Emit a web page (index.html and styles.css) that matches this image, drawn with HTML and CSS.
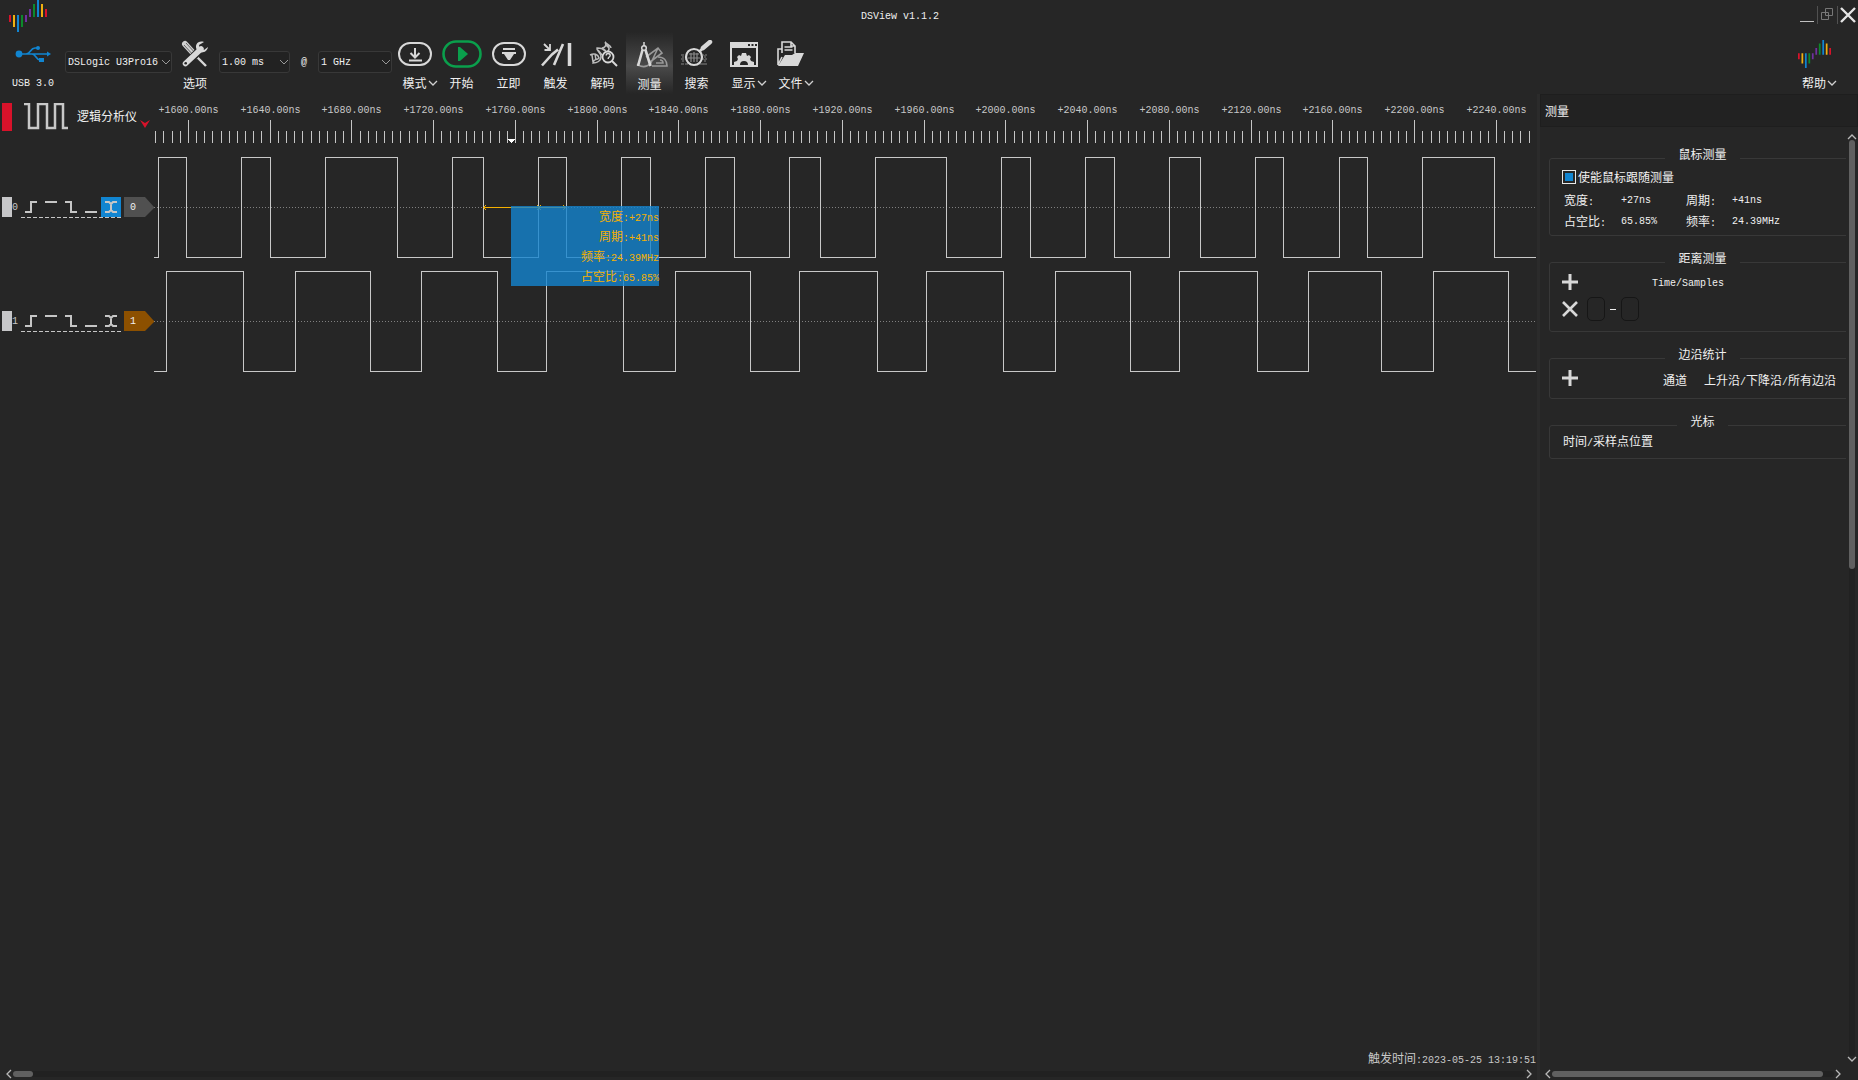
FILE: index.html
```html
<!DOCTYPE html>
<html lang="zh-CN">
<head>
<meta charset="utf-8">
<title>DSView v1.1.2</title>
<link rel="stylesheet" href="styles.css">
</head>
<body>
<svg class="defs" aria-hidden="true">
  <symbol id="logo" viewBox="0 0 38 32">
    <path fill="#d8122a" d="M0 15h2v7h-2zM36 9h2v8h-2z"/>
    <path fill="#f0b010" d="M4 15h2v12h-2zM32 4h2v13h-2z"/>
    <path fill="#1185d1" d="M8 15h2v17h-2zM28 0h2v17h-2z"/>
    <path fill="#0c8a2c" d="M12 15h2v12h-2zM24 4h2v13h-2z"/>
    <path fill="#7030a0" d="M16 15h2v7h-2zM20 9h2v8h-2z"/>
  </symbol>
  <symbol id="down" viewBox="0 0 10 6"><path d="M1 1l4 4 4-4" fill="none" stroke="currentColor" stroke-width="1.300"/></symbol>
  <symbol id="plus" viewBox="0 0 16 16"><path d="M8 0v16M0 8h16" stroke="#d8d8d8" stroke-width="3"/></symbol>
  <symbol id="cross" viewBox="0 0 16 16"><path d="M1 1l14 14M15 1L1 15" stroke="#d8d8d8" stroke-width="2.600"/></symbol>
  <symbol id="triggers" viewBox="0 0 80 20">
    <path d="M4 15h6V5h6M24 5h12M44 5h6v10h6M64 15h12" fill="none" stroke="#c6c6c6" stroke-width="2"/>
  </symbol>
  <symbol id="either" viewBox="0 0 20 20">
    <path d="M4 5h4l2 2 2-2h4M4 15h4l2-2 2 2h4M10 6v8" fill="none" stroke="#c6c6c6" stroke-width="2"/>
  </symbol>
</svg>

<header class="titlebar">
  <svg class="app-logo"><use href="#logo"/></svg>
  <h1 class="latin">DSView v1.1.2</h1>
  <div class="window-buttons">
    <button class="win" aria-label="最小化"><svg width="14" height="18"><path d="M0 15.500h14" stroke="#c0c0c0"/></svg></button>
    <button class="win split" aria-label="还原"><svg width="14" height="18"><path d="M1.500 6.500h7v7h-7zM5.500 2.500h7v7h-7z" fill="none" stroke="#777"/></svg></button>
    <button class="win split" aria-label="关闭"><svg width="16" height="18"><path d="M1 2l14 14M15 2L1 16" stroke="#e4e4e4" stroke-width="2.400"/></svg></button>
  </div>
</header>

<nav class="toolbar">
  <button class="tool usb">
    <svg class="icon" viewBox="0 0 36 28"><g fill="none" stroke="#1185d1" stroke-width="1.600"><path d="M3 14h30M11 14c5 0 4-6 9-6h3M17 14c4 0 4 6 8 6h2"/></g><g fill="#1185d1"><circle cx="4" cy="14" r="3.400"/><path d="M32 11.500l4 2.500-4 2.500z"/><circle cx="23" cy="8" r="2"/><path d="M24 18h5v4h-5z"/></g></svg>
    <span class="latin">USB 3.0</span>
  </button>
  <select class="combo device latin" aria-label="设备"><option>DSLogic U3Pro16</option></select>
  <button class="tool options">
    <svg class="icon" viewBox="0 0 28 28"><path d="M4 4l11 12" stroke="#d0d0d0" stroke-width="6" stroke-linecap="round"/><path d="M3 5l11 12M5 3l11 12" stroke="#666" stroke-width="1"/><path d="M16 17l9 9" stroke="#d8d8d8" stroke-width="2.400"/><path d="M5 24L20 9" stroke="#262626" stroke-width="8"/><path d="M4.500 23.500L20 9" stroke="#d8d8d8" stroke-width="5.500" stroke-linecap="round"/><path d="M23 2c-6-2-10 3-7 8 3 4 10 3 11-3l-4 3-4-1-1-4z" fill="#d8d8d8"/><circle cx="4.700" cy="23.300" r="1.300" fill="#262626"/></svg>
    <span>选项</span>
  </button>
  <select class="combo duration latin" aria-label="采样时长"><option>1.00 ms</option></select>
  <span class="at latin">@</span>
  <select class="combo rate latin" aria-label="采样率"><option>1 GHz</option></select>
  <div class="tools">
    <button class="tool menu">
      <svg class="icon" viewBox="0 0 40 28"><g fill="none" stroke="#d8d8d8" stroke-width="2"><rect x="4" y="3" width="32" height="22" rx="11"/><path d="M20 8v9M15.500 13l4.500 4.500 4.500-4.500M14 20.500h13"/></g></svg>
      <span>模式<svg class="chev"><use href="#down"/></svg></span>
    </button>
    <button class="tool">
      <svg class="icon" viewBox="0 0 40 28"><rect x="1.500" y="1.500" width="37" height="25" rx="12.500" fill="none" stroke="#0a9f4c" stroke-width="2.600"/><path d="M16 7h2l8 7-8 7h-2z" fill="#0a9f4c"/></svg>
      <span>开始</span>
    </button>
    <button class="tool">
      <svg class="icon" viewBox="0 0 40 28"><rect x="4" y="3" width="32" height="22" rx="11" fill="none" stroke="#d8d8d8" stroke-width="2"/><path d="M14 8h12v2H14zM13 12h14v2h-2l-4 6h-2l-4-6h-2z" fill="#d8d8d8"/></svg>
      <span>立即</span>
    </button>
    <button class="tool">
      <svg class="icon" viewBox="0 0 40 28"><g fill="none" stroke="#d8d8d8"><path d="M8 4l6 6M8.500 10H14V4" stroke-width="1.800"/><path d="M6 25.500l10-11 6-5M18 25l9-21" stroke-width="2.600"/><path d="M33.500 3v23" stroke-width="3.500"/></g></svg>
      <span>触发</span>
    </button>
    <button class="tool">
      <svg class="icon" viewBox="0 0 40 28"><g fill="none" stroke="#bdbdbd" stroke-width="1.500"><path d="M7 15c4-2 8-1 9 3-3 3-5 0-6 5 4 0 8-2 8-6 0-5-5-6-4-9 4 0 7 1 9 3M22 2c2 3 0 6-3 6M22 2c5 4 5 8 2 10M28 8c0-3-4-3-6-6M9 15l1 7M12 14l1 6M15 10l4 5M18 8l4 3M23 5l3 3"/></g><circle cx="25" cy="17" r="5.500" fill="#262626" stroke="#d8d8d8" stroke-width="1.800"/><path d="M29 21l5 5" stroke="#d8d8d8" stroke-width="2"/><path d="M23.200 15.500c0-3 4-2.500 4 0 0 1.500-2 1.500-2 3v.6" fill="none" stroke="#d8d8d8" stroke-width="1.400"/></svg>
      <span>解码</span>
    </button>
    <button class="tool active" aria-pressed="true">
      <svg class="icon" viewBox="0 0 40 28"><g fill="none" stroke="#9a9a9a" stroke-width="1.600"><path d="M16 16L28 7l4 5-12 9M28 7L20 24M7 23c5 4 10 3 14-1"/><path d="M22 25h15c0-5-3-9-9-9M26 22h7c0-2-1-3-3-3"/></g><g fill="none" stroke="#d8d8d8"><circle cx="14" cy="7" r="2.300" stroke-width="1.500"/><path d="M14 1v4" stroke-width="1.500"/><path d="M12.500 9L8 25M15.500 9l5 16" stroke-width="2.600"/></g></svg>
      <span>测量</span>
    </button>
    <button class="tool">
      <svg class="icon" viewBox="0 0 40 28"><path d="M4 15h26M4 19h26M4 24h26M6 15v10M10 15v10M24 15v10M28 15v10" stroke="#555" stroke-width="2" stroke-dasharray="3 1"/><circle cx="17" cy="17" r="8" fill="#262626" stroke="#d8d8d8" stroke-width="2.200"/><path d="M12 14h10M11 18h12M14 13v9M17 12v10M20 13v9" stroke="#8a8a8a" stroke-width="1.200"/><path d="M22 12l5-5" stroke="#d8d8d8" stroke-width="2.500"/><path d="M26 8l7-6" stroke="#d8d8d8" stroke-width="4.500" stroke-linecap="round"/></svg>
      <span>搜索</span>
    </button>
    <button class="tool menu">
      <svg class="icon" viewBox="0 0 40 28"><path d="M6 2h28v25H6zM8 8v17h24V8zM24 4v2h2V4zM27.500 4v2h2V4zM31 4v2h2V4z" fill="#d8d8d8" fill-rule="evenodd"/><path d="M10 25v-3l3-1 1-2-1-2 2-2 2 1 1-3h4l1 3 2-1 2 2-1 2 1 2 3 1v3h-6a4 4 0 0 0-8 0z" fill="#d8d8d8"/></svg>
      <span>显示<svg class="chev"><use href="#down"/></svg></span>
    </button>
    <button class="tool menu">
      <svg class="icon" viewBox="0 0 40 28"><g fill="none" stroke="#d8d8d8" stroke-width="1.600"><path d="M11 13V2h9l4 4v7M20 2v4h4M13.500 7h8M13.500 10h8M11 9H7v16l4-8"/></g><path d="M14 15h7l3-2h9l-6 13H7z" fill="#d8d8d8"/></svg>
      <span>文件<svg class="chev"><use href="#down"/></svg></span>
    </button>
  </div>
  <button class="tool menu help">
    <svg class="icon"><use href="#logo"/></svg>
    <span>帮助<svg class="chev"><use href="#down"/></svg></span>
  </button>
</nav>

<main class="workspace">
  <section class="viewer">
    <div class="traces">
      <aside class="channels">
        <div class="analyzer">
          <i class="red-bar"></i>
          <svg class="pulse" viewBox="0 0 44 28"><path d="M0 1h5v24h9V1h9v24h8V1h8v24h5" fill="none" stroke="#c8c8c8" stroke-width="2.500"/></svg>
          <span>逻辑分析仪</span>
          <svg class="red-arrow" viewBox="0 0 10 8"><path d="M0 0l5 3 5-3-5 8z" fill="#d8122a"/></svg>
        </div>
        <div class="channel">
          <i class="bar"></i><span class="index latin">0</span>
          <div class="trigger"><svg width="80" height="20"><use href="#triggers"/></svg><svg class="on" width="20" height="20"><use href="#either"/></svg></div>
          <span class="tag latin">0</span>
        </div>
        <div class="channel">
          <i class="bar"></i><span class="index latin">1</span>
          <div class="trigger"><svg width="80" height="20"><use href="#triggers"/></svg><svg width="20" height="20"><use href="#either"/></svg></div>
          <span class="tag orange latin">1</span>
        </div>
      </aside>
      <div class="plot">
        <svg id="plot" class="plot-svg" shape-rendering="crispEdges"></svg>
        <div class="tip">
          <p>宽度<span class="latin">:+27ns</span></p>
          <p>周期<span class="latin">:+41ns</span></p>
          <p>频率<span class="latin">:24.39MHz</span></p>
          <p>占空比<span class="latin">:65.85%</span></p>
        </div>
      </div>
    </div>
    <p class="trigger-time">触发时间<span class="latin">:2023-05-25 13:19:51</span></p>
    <div class="hscroll main-scroll">
      <svg class="chev left"><use href="#down"/></svg>
      <div class="track"><div class="thumb start"></div></div>
      <svg class="chev right"><use href="#down"/></svg>
    </div>
  </section>

  <aside class="panel">
    <h2>测量</h2>
    <div class="panel-body">
      <div class="groups">
        <fieldset class="mouse">
          <legend>鼠标测量</legend>
          <label class="check"><input type="checkbox" checked>使能鼠标跟随测量</label>
          <dl>
            <dt>宽度<span class="latin">:</span></dt><dd class="latin">+27ns</dd>
            <dt>周期<span class="latin">:</span></dt><dd class="latin">+41ns</dd>
            <dt>占空比<span class="latin">:</span></dt><dd class="latin">65.85%</dd>
            <dt>频率<span class="latin">:</span></dt><dd class="latin">24.39MHz</dd>
          </dl>
        </fieldset>
        <fieldset class="distance">
          <legend>距离测量</legend>
          <div class="line">
            <button class="mini" aria-label="添加距离"><svg><use href="#plus"/></svg></button>
            <span class="samples latin">Time/Samples</span>
          </div>
          <div class="line pair">
            <button class="mini" aria-label="删除距离"><svg><use href="#cross"/></svg></button>
            <button class="cursor" aria-label="起始光标"></button>
            <i class="dash"></i>
            <button class="cursor" aria-label="结束光标"></button>
          </div>
        </fieldset>
        <fieldset class="edges">
          <legend>边沿统计</legend>
          <div class="line">
            <button class="mini" aria-label="添加边沿"><svg><use href="#plus"/></svg></button>
            <span class="chan">通道</span>
            <span class="kinds">上升沿<span class="latin">/</span>下降沿<span class="latin">/</span>所有边沿</span>
          </div>
        </fieldset>
        <fieldset class="cursors">
          <legend>光标</legend>
          <p>时间<span class="latin">/</span>采样点位置</p>
        </fieldset>
      </div>
      <div class="vscroll">
        <svg class="chev up"><use href="#down"/></svg>
        <div class="track"><div class="thumb"></div></div>
        <svg class="chev"><use href="#down"/></svg>
      </div>
    </div>
    <div class="hscroll panel-scroll">
      <svg class="chev left"><use href="#down"/></svg>
      <div class="track"><div class="thumb wide"></div></div>
      <svg class="chev right"><use href="#down"/></svg>
    </div>
  </aside>
</main>
<script src="script.js"></script>
</body>
</html>
```
FILE: styles.css
```css
* { box-sizing: border-box; }
html, body { height: 100%; }
body {
  margin: 0;
  display: flex;
  flex-direction: column;
  overflow: hidden;
  background: #262626;
  color: #f0f0f0;
  font: 12px/16px "Noto Sans CJK SC", sans-serif;
}
.latin { font-family: "Liberation Mono", "Noto Sans CJK SC", monospace; font-size: 10px; }
p .latin, dt .latin, .kinds .latin { line-height: 10px; }
.defs { display: none; }
svg { display: block; flex: none; }
h1, h2, p, dl, dd { margin: 0; font-weight: normal; }
button { padding: 0; border: 0; background: none; color: inherit; font: inherit; }

.titlebar { display: flex; height: 32px; flex: none; }
.app-logo { width: 38px; height: 32px; margin-left: 9px; }
.titlebar h1 { flex: 1; padding-right: 47px; text-align: center; line-height: 34px; }
.window-buttons { display: flex; width: 58px; align-items: center; gap: 3px; padding-bottom: 2px; }
.win.split { border-left: 1px solid #505050; padding-left: 2px; }

.toolbar { display: flex; flex: none; height: 62px; }
.tool { display: flex; flex-direction: column; align-items: center; width: 47px; padding-top: 8px; gap: 7px; }
.tool .icon { width: 40px; height: 28px; }
.tool span { display: flex; align-items: center; white-space: nowrap; }
.chev { width: 10px; height: 6px; color: #b8b8b8; }
.tool .chev { margin-left: 1px; color: #d0d0d0; }
.menu span { padding-left: 11px; }
.tool.active { background: linear-gradient(#262626, #4a4a4a 55%, #262626); padding-top: 9px; }
.tool .latin { line-height: 18px; }
.usb { width: 65px; padding-left: 1px; }
.combo {
  appearance: none;
  height: 22px;
  margin-top: 19px;
  padding: 0 2px;
  border: 1px solid #383838;
  border-radius: 3px;
  color: #f0f0f0;
  background: #222 url("data:image/svg+xml,%3Csvg xmlns='http://www.w3.org/2000/svg' width='10' height='6'%3E%3Cpath d='M1 1l4 4 4-4' fill='none' stroke='%23999'/%3E%3C/svg%3E") no-repeat right 0 center;
}
.device { width: 107px; }
.duration { width: 71px; }
.rate { width: 74px; }
.options { width: 47px; padding-right: 1px; }
.options .icon { width: 28px; }
.at { width: 28px; text-align: center; padding-top: 23px; }
.tools { display: flex; flex: 1; margin-left: -1px; }
.help { width: 62px; margin-right: 13px; }
.help .icon { width: 33px; }

.workspace { display: flex; flex: 1; min-height: 0; }
.viewer { display: flex; flex: 1; flex-direction: column; min-width: 0; }
.traces { display: flex; flex: 1; min-height: 0; }
.channels { width: 154px; padding-top: 9px; flex: none; }
.analyzer { display: flex; height: 94px; padding-left: 2px; }
.red-bar { width: 10px; height: 28px; background: #d8122a; }
.pulse { width: 44px; height: 28px; margin: 0 9px 0 12px; }
.analyzer span { margin-top: 5px; }
.red-arrow { width: 10px; height: 8px; margin: 17px 0 0 3px; }
.channel { display: flex; height: 20px; margin-bottom: 94px; padding-left: 2px; }
.bar { width: 10px; background: #c6c6c8; }
.index { width: 9px; line-height: 22px; color: #c6c6c8; }
.trigger {
  display: flex;
  height: 21px;
  background: repeating-linear-gradient(90deg, #c6c6c6 0 4px, transparent 4px 6px) left bottom / 100% 1px no-repeat;
}
.on { background: #1185d1; }
.tag {
  width: 30px;
  margin-left: 3px;
  padding-left: 6px;
  line-height: 22px;
  background: #505050;
  clip-path: polygon(0 0, 21px 0, 30px 10px, 30px 11px, 21px 20px, 0 20px);
}
.orange { background: #8c5000; }
.plot { position: relative; flex: 1; min-width: 0; margin-right: 1px; }
.plot-svg { width: 100%; height: 100%; }
.plot-svg text { fill: #c8c8c8; text-anchor: middle; }
.tip {
  position: absolute;
  left: 357px;
  top: 112px;
  width: 148px;
  background: rgba(20, 132, 208, .8);
  color: #f5b000;
  text-align: right;
  line-height: 20px;
}
.trigger-time { text-align: right; color: #c8c8c8; padding: 0 1px 0 0; }

.hscroll { display: flex; height: 14px; flex: none; align-items: center; padding: 1px 4px 0; }
.main-scroll { padding-left: 5px; }
.panel-scroll { padding-right: 16px; }
.track { flex: 1; background: #212121; border-radius: 3px; }
.hscroll .track { height: 6px; }
.thumb { height: 6px; border-radius: 3px; background: #606060; }
.start { width: 20px; }
.wide { width: 96%; }
.left { transform: rotate(90deg); }
.right { transform: rotate(-90deg); }
.up { transform: rotate(180deg); }
.hscroll .chev { width: 10px; margin: 0 -1px; }

.panel { display: flex; flex-direction: column; width: 321px; flex: none; border-left: 3px solid #2b2b2b; }
.panel h2 { height: 33px; padding-left: 4px; font-size: 12px; line-height: 31px; background: #222; border: 1px solid #1e1e1e; }
.panel-body { display: flex; flex: 1; min-height: 0; }
.groups { flex: 1; min-width: 0; overflow: hidden; padding: 19px 0 0 9px; }
fieldset { width: 307px; margin: 0 0 14px; padding: 0 12px; border: 1px solid #383838; border-radius: 3px; }
legend { margin: 0 auto; padding: 0 13px 8px; }
.mouse { height: 90px; }
.distance { height: 82px; }
.edges { height: 53px; }
.cursors { height: 46px; }
.check { display: flex; align-items: center; gap: 2px; height: 14px; }
.check input { appearance: none; width: 14px; height: 14px; margin: 0; border: 1px solid #e8e8e8; background: #1185d1; box-shadow: inset 0 0 0 2px #262626; }
dl { display: grid; grid-template-columns: 57px 65px 46px 1fr; row-gap: 3px; padding: 8px 0 0 2px; }
dd.latin { line-height: 18px; }
dt { white-space: nowrap; }
.line { display: flex; height: 16px; align-items: center; }
.mini svg { width: 16px; height: 16px; }
.samples { margin-left: 74px; padding-top: 4px; }
.pair { height: 24px; margin-top: 7px; gap: 5px; }
.pair .mini { margin-right: 4px; }
.cursor { width: 18px; height: 24px; border: 1px solid #161616; border-radius: 5px; }
.dash { width: 6px; height: 1px; background: #f0f0f0; }
.chan { margin: 0 17px 0 85px; }
.chan, .kinds { padding-top: 4px; white-space: nowrap; }
.cursors p { padding-left: 1px; margin-top: -4px; }
.vscroll { display: flex; width: 12px; flex-direction: column; align-items: center; padding: 7px 0 4px; }
.vscroll .track { width: 6px; }
.vscroll .thumb { height: 429px; }
```
FILE: script.js
```javascript
const NS = "http://www.w3.org/2000/svg";
const plot = document.getElementById("plot");

function add(name, attrs, text) {
  const el = document.createElementNS(NS, name);
  for (const key in attrs) el.setAttribute(key, attrs[key]);
  if (text) el.textContent = text;
  plot.appendChild(el);
}

// Time ruler: one tick every 4 ns, a long labelled one every 40 ns.
const WIDTH = 1382;
const STEP = 8.175;
let ticks = "";
for (let i = -4; i <= 164; i++) {
  const x = Math.floor(34.4 + i * STEP) + 0.5;
  const major = i % 10 === 0;
  ticks += `M${x} ${major ? 26 : 37}V49`;
  if (major) add("text", { x, y: 19, class: "latin" }, `+${1600 + i * 4}.00ns`);
}
add("path", { d: ticks, stroke: "#c6c6c6" });
add("path", { d: "M354 45h7l-3 4h-1z", fill: "#fff" });

// Logic traces: positions at which each signal toggles, starting low.
const signals = [
  { high: 63, low: 163, edges: [4, 32, 87, 116, 171, 243, 298, 329, 384, 412, 467, 496, 551, 580, 635, 666, 721, 792, 847, 876, 931, 960, 1015, 1046, 1101, 1129, 1185, 1213, 1268, 1340] },
  { high: 177, low: 277, edges: [12, 89, 141, 216, 267, 343, 392, 469, 521, 596, 645, 723, 772, 849, 901, 976, 1025, 1103, 1154, 1227, 1279, 1354] }
];
for (const s of signals) {
  const mid = (s.high + s.low) / 2 + 0.5;
  add("path", { d: `M0 ${mid}H${WIDTH}`, stroke: "#808080", "stroke-dasharray": "1 2" });
  let d = `M0 ${s.low + 0.5}`;
  s.edges.forEach((x, i) => {
    d += `H${x + 0.5}V${(i % 2 ? s.low : s.high) + 0.5}`;
  });
  add("path", { d: d + `H${WIDTH}`, stroke: "#c8c8c8", fill: "none" });
}

// Measured pulse.
add("path", {
  d: "M330 113.500H411M332 111l-2 2.500 2 2.500M383 111l4 5M387 111l-4 5M409 111l2 2.500-2 2.500",
  stroke: "#f5b000", fill: "none"
});
```
